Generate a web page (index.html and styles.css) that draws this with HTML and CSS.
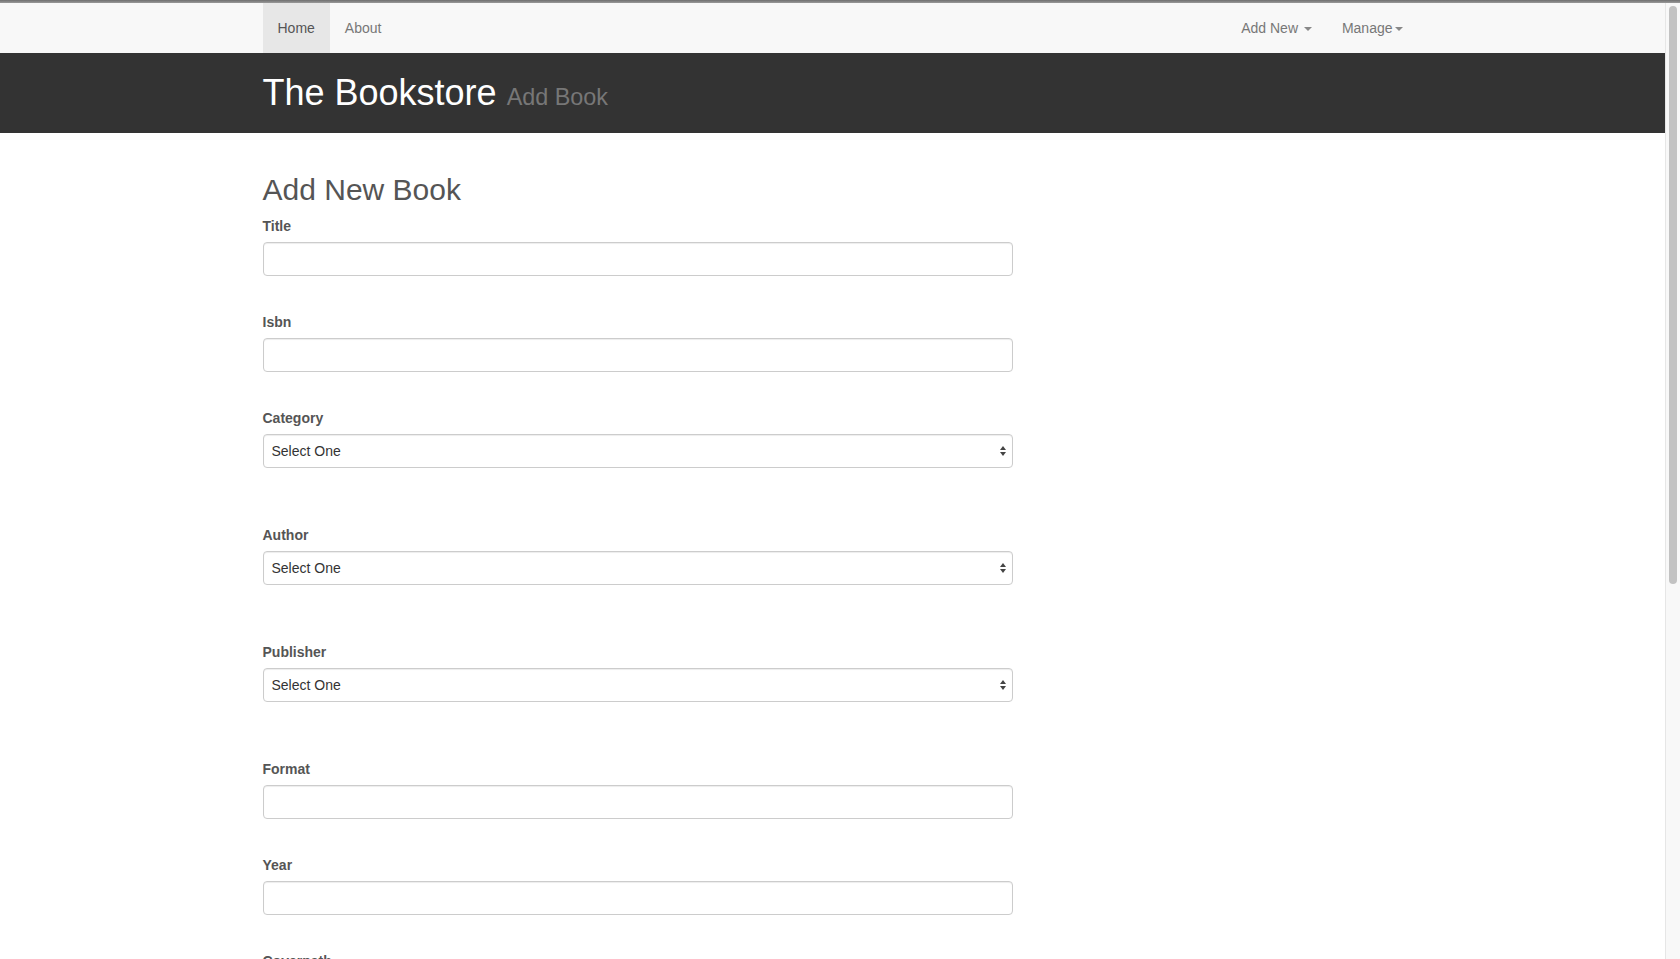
FILE: index.html
```html
<!DOCTYPE html>
<html lang="en">
<head>
<meta charset="utf-8">
<title>Add Book - The Bookstore</title>
<link rel="stylesheet" href="styles.css">
</head>
<body>
<div class="screen">
  <div class="topline"></div>
  <div class="window">
    <div class="page">
      <nav class="navbar">
        <div class="container navbar-inner">
          <ul class="nav">
            <li class="active"><a href="#">Home</a></li>
            <li><a href="#">About</a></li>
          </ul>
          <ul class="nav nav-right">
            <li><a href="#">Add New <span class="caret"></span></a></li>
            <li><a href="#">Manage<span class="caret"></span></a></li>
          </ul>
        </div>
      </nav>
      <header class="masthead">
        <div class="container">
          <h1>The Bookstore <small>Add Book</small></h1>
        </div>
      </header>
      <main class="container main">
        <h2>Add New Book</h2>
        <form class="form">
          <div class="form-group">
            <label>Title</label>
            <input class="form-control" type="text">
          </div>
          <div class="form-group">
            <label>Isbn</label>
            <input class="form-control" type="text">
          </div>
          <div class="form-group select-group">
            <label>Category</label>
            <div class="select-wrap">
              <select class="form-control"><option>Select One</option></select>
              <span class="arrows"><span class="up"></span><span class="down"></span></span>
            </div>
          </div>
          <div class="form-group select-group">
            <label>Author</label>
            <div class="select-wrap">
              <select class="form-control"><option>Select One</option></select>
              <span class="arrows"><span class="up"></span><span class="down"></span></span>
            </div>
          </div>
          <div class="form-group select-group">
            <label>Publisher</label>
            <div class="select-wrap">
              <select class="form-control"><option>Select One</option></select>
              <span class="arrows"><span class="up"></span><span class="down"></span></span>
            </div>
          </div>
          <div class="form-group">
            <label>Format</label>
            <input class="form-control" type="text">
          </div>
          <div class="form-group">
            <label>Year</label>
            <input class="form-control" type="text">
          </div>
          <div class="form-group">
            <label>Coverpath</label>
            <input class="form-control" type="text">
          </div>
        </form>
      </main>
    </div>
    <div class="scrollbar"><div class="thumb"></div></div>
  </div>
</div>
</body>
</html>
```
FILE: styles.css
```css
* { box-sizing: border-box; }
html, body { margin: 0; padding: 0; }
body {
  font-family: "Liberation Sans", Arial, Helvetica, sans-serif;
  font-size: 14px;
  line-height: 20px;
  color: #555;
  background: #fff;
}
.screen {
  width: 1680px;
  height: 959px;
  display: flex;
  flex-direction: column;
  overflow: hidden;
}
.topline {
  height: 3px;
  flex: none;
  background: linear-gradient(to bottom, #6f6f6f, #9a9a9a);
}
.window {
  flex: 1;
  display: flex;
  min-height: 0;
}
.page {
  flex: 1;
  overflow: hidden;
  background: #fff;
}
.scrollbar {
  width: 15px;
  flex: none;
  background: #f8f8f8;
  border-left: 1px solid #e6e6e6;
  padding: 3px 0 0 3px;
}
.thumb {
  width: 8px;
  height: 578px;
  border-radius: 4px;
  background: #c2c2c2;
}
.container {
  width: 1170px;
  margin: 0 auto;
  padding: 0 15px;
}
.navbar {
  height: 50px;
  background: #f8f8f8;
}
.navbar-inner {
  display: flex;
  justify-content: space-between;
  height: 50px;
}
.nav {
  list-style: none;
  margin: 0;
  padding: 0;
  display: flex;
}
.nav-right { margin-right: -15px; }
.nav a {
  display: block;
  padding: 15px;
  line-height: 20px;
  color: #777;
  text-decoration: none;
}
.nav .active a {
  background: #e7e7e7;
  color: #555;
}
.caret {
  display: inline-block;
  width: 0;
  height: 0;
  margin-left: 2px;
  vertical-align: middle;
  border-top: 4px solid #888;
  border-left: 4px solid transparent;
  border-right: 4px solid transparent;
}
.masthead {
  background: #333;
  height: 80px;
  padding-top: 20px;
}
.masthead h1 {
  margin: 0;
  font-size: 36px;
  line-height: 1.1;
  font-weight: 500;
  color: #fff;
}
.masthead small {
  font-size: 65%;
  font-weight: normal;
  line-height: 1;
  color: #777;
}
.main { padding-top: 20px; }
.main h2 {
  margin: 20px 0 10px;
  font-size: 30px;
  line-height: 1.1;
  font-weight: 500;
  color: #555;
}
.form { width: 750px; }
.form-group { margin-bottom: 36px; }
.form-group.select-group { margin-bottom: 57px; }
.form-group label {
  display: inline-block;
  margin-bottom: 6px;
  font-weight: bold;
  color: #555;
}
.form-control {
  display: block;
  width: 100%;
  height: 34px;
  padding: 6px 12px;
  font-family: inherit;
  font-size: 14px;
  line-height: 20px;
  color: #333;
  background: #fff;
  border: 1px solid #ccc;
  border-radius: 4px;
  box-shadow: inset 0 1px 1px rgba(0, 0, 0, 0.075);
  margin: 0;
}
select.form-control {
  -webkit-appearance: none;
  appearance: none;
  padding: 6px 8px;
}
.select-wrap { position: relative; }
.arrows {
  position: absolute;
  right: 7px;
  top: 12px;
  display: flex;
  flex-direction: column;
  gap: 2px;
  pointer-events: none;
}
.arrows .up, .arrows .down {
  width: 0;
  height: 0;
  border-left: 3px solid transparent;
  border-right: 3px solid transparent;
}
.arrows .up { border-bottom: 4px solid #444; }
.arrows .down { border-top: 4px solid #444; }
```
